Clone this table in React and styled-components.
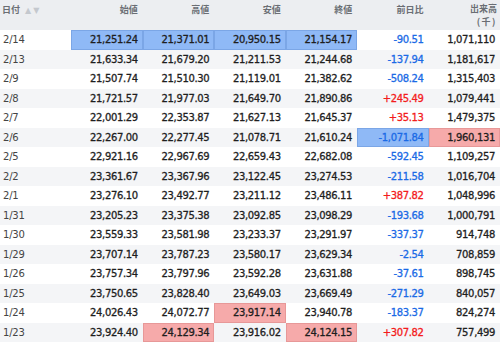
import React from "react";
import styled, { createGlobalStyle } from "styled-components";

const Global = createGlobalStyle`
  html, body { margin: 0; padding: 0; background: #fff; }
  body { font-family: "DejaVu Sans", Verdana, "Noto Sans CJK JP", sans-serif; }
`;

const Table = styled.div`
  width: 500px;
  display: flex;
  flex-direction: column;
`;

const HeadWrap = styled.div`
  display: grid;
  grid-template-columns: repeat(7, 1fr);
  height: 30px;
  background: #eceef1;
`;

const HeadCell = styled.div`
  box-sizing: border-box;
  color: #6a6e74;
  font-size: 9px;
  font-weight: bold;
  line-height: 10px;
  padding: ${(p) => (p.$last ? "3.5px" : "5px")} ${(p) => (p.$left ? "0" : p.$last ? "3px" : "5px")} 0
    ${(p) => (p.$left ? "2px" : "0")};
  font-family: "Noto Sans CJK JP", sans-serif;
  display: flex;
  flex-direction: column;
  gap: 3px;
  align-items: ${(p) => (p.$left ? "flex-start" : "flex-end")};
`;

const HeadLine = styled.span`
  display: block;
  height: 10px;
  line-height: 10px;
  letter-spacing: ${(p) => (p.$spaced ? "1.5px" : "0")};
`;

const Arrows = styled.span`
  color: #c4c8ce;
  font-size: 8px;
  margin-left: 5px;
  letter-spacing: 2px;
  font-family: "DejaVu Sans", sans-serif;
  font-weight: normal;
`;

const Row = styled.div`
  display: grid;
  grid-template-columns: repeat(7, 1fr);
  height: 19.5px;
  background: ${(p) => (p.$alt ? "#f4f5f7" : "#ffffff")};
`;

const Cell = styled.div`
  box-sizing: border-box;
  display: flex;
  align-items: center;
  justify-content: ${(p) => (p.$left ? "flex-start" : "flex-end")};
  padding: 0 ${(p) => (p.$left ? "0" : "4px")} 0 ${(p) => (p.$left ? "2px" : "0")};
  font-size: 10px;
  letter-spacing: ${(p) => (p.$left ? "-0.2px" : "-0.35px")};
  color: ${(p) =>
    p.$tone === "neg" ? "#1a6ae6" : p.$tone === "pos" ? "#f31c1c" : p.$left ? "#444" : "#1e1e1e"};
  -webkit-text-stroke: ${(p) => (p.$left ? "0" : "0.3px")} currentColor;
  background: ${(p) =>
    p.$hl === "blue" ? "#8fb9f6" : p.$hl === "red" ? "#f6aaaa" : "transparent"};
  border: 1px solid
    ${(p) => (p.$hl === "blue" ? "#7ba6e6" : p.$hl === "red" ? "#e79898" : "transparent")};
  white-space: nowrap;
`;

const rows = [
  ["2/14", "21,251.24", "21,371.01", "20,950.15", "21,154.17", "-90.51", "1,071,110", { 1: "blue", 2: "blue", 3: "blue", 4: "blue" }],
  ["2/13", "21,633.34", "21,679.20", "21,211.53", "21,244.68", "-137.94", "1,181,617", {}],
  ["2/9", "21,507.74", "21,510.30", "21,119.01", "21,382.62", "-508.24", "1,315,403", {}],
  ["2/8", "21,721.57", "21,977.03", "21,649.70", "21,890.86", "+245.49", "1,079,441", {}],
  ["2/7", "22,001.29", "22,353.87", "21,627.13", "21,645.37", "+35.13", "1,479,375", {}],
  ["2/6", "22,267.00", "22,277.45", "21,078.71", "21,610.24", "-1,071.84", "1,960,131", { 5: "blue", 6: "red" }],
  ["2/5", "22,921.16", "22,967.69", "22,659.43", "22,682.08", "-592.45", "1,109,257", {}],
  ["2/2", "23,361.67", "23,367.96", "23,122.45", "23,274.53", "-211.58", "1,016,704", {}],
  ["2/1", "23,276.10", "23,492.77", "23,211.12", "23,486.11", "+387.82", "1,048,996", {}],
  ["1/31", "23,205.23", "23,375.38", "23,092.85", "23,098.29", "-193.68", "1,000,791", {}],
  ["1/30", "23,559.33", "23,581.98", "23,233.37", "23,291.97", "-337.37", "914,748", {}],
  ["1/29", "23,707.14", "23,787.23", "23,580.17", "23,629.34", "-2.54", "708,859", {}],
  ["1/26", "23,757.34", "23,797.96", "23,592.28", "23,631.88", "-37.61", "898,745", {}],
  ["1/25", "23,750.65", "23,828.40", "23,649.03", "23,669.49", "-271.29", "840,057", {}],
  ["1/24", "24,026.43", "24,072.77", "23,917.14", "23,940.78", "-183.37", "824,274", { 3: "red" }],
  ["1/23", "23,924.40", "24,129.34", "23,916.02", "24,124.15", "+307.82", "757,499", { 2: "red", 4: "red" }],
];

const heads = ["始値", "高値", "安値", "終値", "前日比"];

export default function App() {
  return (
    <>
      <Global />
      <Table>
        <HeadWrap>
          <HeadCell $left>
            <HeadLine>
              日付<Arrows>▲▼</Arrows>
            </HeadLine>
          </HeadCell>
          {heads.map((h) => (
            <HeadCell key={h}>
              <HeadLine>{h}</HeadLine>
            </HeadCell>
          ))}
          <HeadCell $last>
            <HeadLine>出来高</HeadLine>
            <HeadLine $spaced>(千)</HeadLine>
          </HeadCell>
        </HeadWrap>
        {rows.map((r, i) => {
          const hl = r[7];
          return (
            <Row key={r[0]} $alt={i % 2 === 1}>
              <Cell $left>{r[0]}</Cell>
              {[1, 2, 3, 4].map((c) => (
                <Cell key={c} $hl={hl[c]}>
                  {r[c]}
                </Cell>
              ))}
              <Cell $hl={hl[5]} $tone={r[5].startsWith("+") ? "pos" : "neg"}>
                {r[5]}
              </Cell>
              <Cell $hl={hl[6]}>{r[6]}</Cell>
            </Row>
          );
        })}
      </Table>
    </>
  );
}
